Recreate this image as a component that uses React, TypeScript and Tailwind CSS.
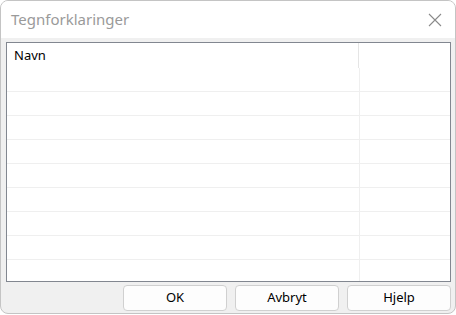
import React from "react";

const rows = Array.from({ length: 9 });

export default function App() {
  return (
    <div className="w-[456px] h-[315px] bg-white" style={{ fontFamily: '"Noto Sans", "Open Sans", sans-serif' }}>
      <div className="w-[456px] h-[314px] border border-[#c4c4c4] rounded-lg overflow-hidden flex flex-col bg-[#f0f0f0]">
        {/* Title bar */}
        <div className="h-[37px] bg-white flex items-center justify-between pl-[10px] pr-[13px] shrink-0">
          <span className="text-[15px] text-[#9a9a9a]">Tegnforklaringer</span>
          <svg width="14" height="14" viewBox="0 0 14 14">
            <path d="M1 1 L13 13 M13 1 L1 13" stroke="#8a8a8a" strokeWidth="1.1" fill="none" />
          </svg>
        </div>

        {/* List */}
        <div className="pt-[4px] pl-[5px]">
          <div className="w-[445px] h-[240px] border border-[#828790] bg-white overflow-hidden">
            <div className="flex h-[25px]">
              <div className="w-[352px] border-r border-[#e5e5e5] flex items-center pl-[7px] pt-[1px] text-[13px] text-black">
                Navn
              </div>
              <div className="flex-1" />
            </div>
            {rows.map((_, i) => (
              <div key={i} className="flex h-[24px] border-b border-[#efefef]">
                <div className="w-[353px] border-r border-[#efefef]" />
                <div className="flex-1" />
              </div>
            ))}
          </div>
        </div>

        {/* Buttons */}
        <div className="flex justify-end gap-[8px] pr-[4px] mt-[3px]">
          {["OK", "Avbryt", "Hjelp"].map((b) => (
            <button
              key={b}
              className="w-[104px] h-[26px] bg-[#fdfdfd] border border-[#d0d0d0] rounded-[4px] text-[13px] text-black flex items-center justify-center"
            >
              {b}
            </button>
          ))}
        </div>
      </div>
    </div>
  );
}
